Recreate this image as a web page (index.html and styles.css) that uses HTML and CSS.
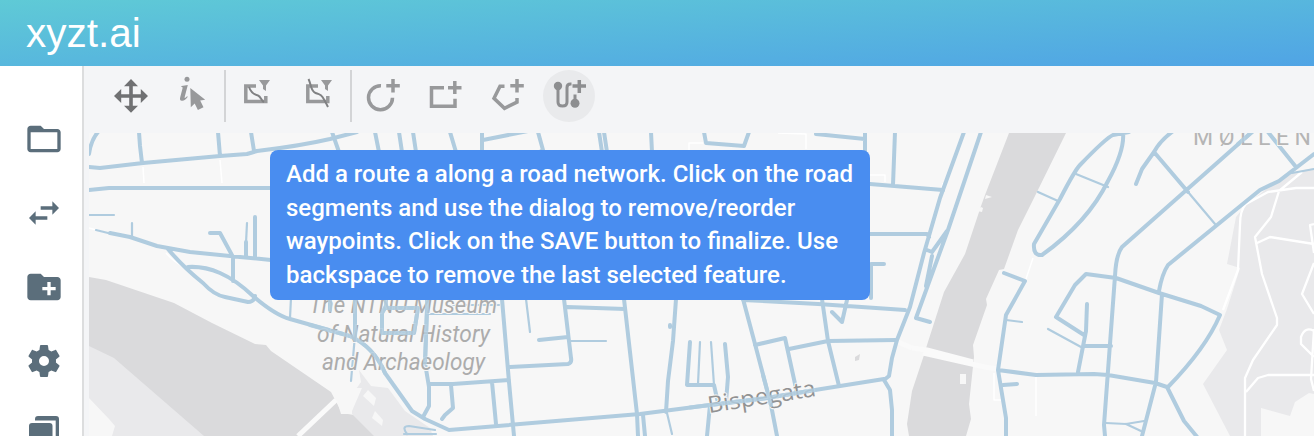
FILE: index.html
```html
<!DOCTYPE html>
<html lang="en">
<head>
<meta charset="utf-8">
<title>xyzt.ai</title>
<link rel="stylesheet" href="styles.css">
</head>
<body>
<header class="header"><span class="brand">xyzt.ai</span></header>
<div class="workspace">
  <nav class="sidebar">
    <svg class="nav-icon" viewBox="0 0 24 24"><path d="M20 6h-8l-2-2H4c-1.1 0-1.99.9-1.99 2L2 18c0 1.100.9 2 2 2h16c1.100 0 2-.9 2-2V8c0-1.100-.9-2-2-2zm0 12H4V8h16v10z"/></svg>
    <svg class="nav-icon" viewBox="0 0 24 24"><path d="M6.990 11L3 15l3.990 4v-3H14v-2H6.990v-3zM21 9l-3.990-4v3H10v2h7.010v3L21 9z"/></svg>
    <svg class="nav-icon" viewBox="0 0 24 24"><path d="M20 6h-8l-2-2H4c-1.110 0-1.990.89-1.990 2L2 18c0 1.110.89 2 2 2h16c1.110 0 2-.89 2-2V8c0-1.110-.89-2-2-2zm-1 8h-3v3h-2v-3h-3v-2h3V9h2v3h3v2z"/></svg>
    <svg class="nav-icon" viewBox="0 0 24 24"><path d="M19.140 12.940c.04-.3.06-.61.06-.94 0-.32-.02-.64-.07-.94l2.030-1.580c.18-.14.23-.41.12-.61l-1.920-3.320c-.12-.22-.37-.29-.59-.22l-2.390.96c-.5-.38-1.030-.7-1.620-.94L14.400 2.810c-.04-.24-.24-.41-.48-.41h-3.840c-.24 0-.43.17-.47.41L9.250 5.350c-.59.24-1.130.57-1.620.94l-2.390-.96c-.22-.08-.47 0-.59.22L2.740 8.870c-.12.21-.08.47.12.61l2.030 1.580c-.05.3-.09.63-.09.94s.02.64.07.94l-2.030 1.580c-.18.14-.23.41-.12.61l1.920 3.320c.12.22.37.29.59.22l2.390-.96c.5.38 1.030.7 1.620.94l.36 2.540c.05.24.24.41.48.41h3.840c.24 0 .44-.17.47-.41l.36-2.540c.59-.24 1.130-.56 1.620-.94l2.390.96c.22.08.47 0 .59-.22l1.920-3.320c.12-.22.07-.47-.12-.61l-2.010-1.580zM12 15a3 3 0 1 1 0-6 3 3 0 0 1 0 6z"/></svg>
    <svg class="nav-icon" viewBox="24 415 40 40"><rect x="29" y="423" width="23.500" height="24" rx="3"/><path d="M35 420.500V419q0-3 3-3H56q3 0 3 3V441H55.700V420.500Z"/></svg>
  </nav>
  <main class="content">
    <div class="toolbar">
      <div class="tool-group">
        <button class="tool tool-dark" aria-label="Pan"><svg viewBox="105 70 52 52"><path d="M131 79l7 7.200h-5.200v8h8V89l7.200 7-7.200 7v-5.200h-8v8h5.200l-7 7-7-7h5.200v-8h-8v5.200l-7.200-7 7.200-7v5.200h8v-8H124z"/></svg></button>
        <button class="tool" aria-label="Select"><svg viewBox="167 70 52 52"><circle cx="187" cy="79.300" r="2.500"/><path d="M181.500 86l6.300-1.100-3.100 12c-.4 1.700.8 1 2.300-.7l.8.500c-2 3.100-4 4.200-6 4-1.800-.2-2.100-1.600-1.600-3.500l2.300-8.700c.3-1.300 0-1.600-1.200-1.600zM190.300 88l14.900 11.800-5 .7 3.300 6.700-5.600 2.700-3.200-6.300-3.900 3.700z"/></svg></button>
      </div>
      <div class="tool-group">
        <button class="tool" aria-label="Filter inside"><svg viewBox="231 70 52 52"><path class="line" d="M256 86h-10.200v15.500h20v-5.500"/><path class="curve" d="M249 87c2 6 5 7.500 9 8.500 3 1 3 5 6 6.500"/><path d="M259 80h11l-4 5.500v5.500l-3-2v-3.500z"/></svg></button>
        <button class="tool" aria-label="Filter crossing"><svg viewBox="293 70 52 52"><path class="line" d="M318 86h-10.200v15.500h20v-5.500"/><path class="curve" d="M308.500 79c3 6 2 12 7 14s5 1 7 4 3 5 5.500 10"/><path d="M321 80h11l-4 5.500v5.500l-3-2v-3.500z"/></svg></button>
      </div>
      <div class="tool-group">
        <button class="tool" aria-label="Add circle"><svg viewBox="357 70 52 52"><path class="line" d="M381 85.700a12 12 0 1 0 11.500 12"/><path class="plus" d="M386.300 85.700h13.500M393 79v13.500"/></svg></button>
        <button class="tool" aria-label="Add rectangle"><svg viewBox="419 70 52 52"><path class="line" d="M444 87.700h-12.500v18.500h23.500v-7.500"/><path class="plus" d="M448 87.700h13.500M454.800 81v13"/></svg></button>
        <button class="tool" aria-label="Add polygon"><svg viewBox="481 70 52 52"><path class="line" d="M504.500 86.300h-4.500l-6 12 10.500 10 12.500-6.200v-4"/><path class="plus" d="M510.300 85.700h13.500M517 79v13.500"/></svg></button>
        <button class="tool tool-active" aria-label="Add route"><svg viewBox="543 70 52 52"><circle cx="558" cy="86" r="4.200"/><circle cx="575" cy="103.200" r="4.500"/><path class="route" d="M558 87v15q0 4 4.500 4t4.500-4V87.500q0-3.500 3.500-3.500h1M575 103v-8.500"/><path class="plus" d="M572.500 86h13.500M579.300 80v13"/></svg></button>
      </div>
    </div>
    <section class="map">
      <svg class="map-canvas" viewBox="89 133 1225 303">
        <g class="water">
          <path d="M89 277L106 280 174 303 212 323 255 344 266 345 271 351 331 392 342 413 360 416 377 436H89Z"/>
          <path d="M1009 133H1066L1034 198 1018 230 1004 269 999 270 986 299 987 305 973 345 974 357 969 404 971 419 966 436H909L907 424 912 391 925 352 927 345 944 292 965 254 981 206 985 195Z"/>
        </g>
        <g class="park">
          <path d="M89 346L114 358 204 436H89Z"/>
          <path d="M359 370L371 386 388 388 405 411 430 428 433 436H374L352 414 352 395 361 382Z"/>
          <path d="M1314 168V394L1309 393 1295 402 1290 416 1261 408V436H1230L1203 384 1227 350 1219 330 1227 309 1240 268 1227 264 1236 217 1245 206 1285 174 1300 171Z"/>
        </g>
        <g class="land">
          <path d="M89 398L109 419 115 426 112 436H89ZM331 388l13 0 18 0-10 23 0 3h-11l-5-16zM368 390l8 8-2 8-11-10zM375 411l8 9-1 6-10-8zM986 195l6 2-7 2zM981 207l2 1-1 4-5-1zM960 374h6v10h-6z"/>
        </g>
        <g class="faint">
          <path d="M143 167l1 16M220 160l2 23M166 253q9 10 17 13M89 228l15 4M943 183l-7 31M689 174v-31h14M778 133l28 1v15M1033 258l-7 21M1036 377v39M994 373v27h7M870 175h15v7"/>
        </g>
        <g class="path-wide">
          <path d="M298 436l38-36M898 342l14 6M923 353l62 14 13 2M912 348l15 2 46 12"/>
        </g>
        <g class="paths">
          <path d="M1245 436V378L1253 360 1277 325V318L1262 274 1255 237 1271 217 1279 191 1302 172M1314 188L1296 188 1268 192 1246 204Q1240 210 1240 225L1238 270 1223 310M1257 243L1270 237 1314 244M1314 224l-4 1 4 28M1314 263l-12 31 12 20M1314 331q-9-5-13 6v7l13 13M1314 329l-3 50 3 12M1246 392L1258 378 1268 375H1314"/>
        </g>
        <g class="roads">
          <path d="M89 154q2-14 9-22M139 132l1 14 2 17M218 132l2 24M251 132l3 19M89 167l11 1 43-5 77-7 27-2 10-3Q300 146 330 139L357 132M89 190l20-2H271"/>
          <path d="M110 233L130 237 157 246 190 252 240 257 271 260M168 249Q183 267 203 283Q214 295 225 297L248 302Q254 302 255 296M188 267Q204 266 220 273T253 296Q275 315 290 319L350 336Q374 347 385 373L412 411 425 419 449 430 640 414 710 405 767 398 815 390 884 379M233 281v-24M210 233h10l13 24M255 257V217M246 257v-15"/>
          <path d="M355 300v40M330 300v10M332 132l7 20M375 132l4 20M399 132l3 20M413 132l3 20M450 132l6 20M482 132v20M483 140l45-9M538 132l5 18-3 2M599 132l3 20M604 132l3 20M651 132l1 20M704 132l2 11 38 3 5-14M816 134l49 5M865 132v20M895 132l-2 53M870 184l73 6"/>
          <path d="M386 299v7l-4 7v20h32l4-25h-32M418 308h9M427 299v10l-2 54 4 24v19l-6 11M429 384h24l56-4M451 385l2 23-8 7-3 4M492 382l4 42M502 299l7 83 5 54M510 367l58-3q4-1 3-6L564 299M567 307l58 2M624 299l13 115 1 22M643 415l2 21M568 337l-29 3"/>
          <path d="M676 299l-3 42-5 40-2 31M670 325v2M690 342l-3 43h27l4 18M725 344l3 33-2 25M710 405l-3 31M743 299l12 45 16 61 6 31M743 300l75 4 87 6M755 345l30-7 12 55M789 349l39-8M822 299l6 42 11 45M828 341l68-1M847 300l-5 22-10-10"/>
          <path d="M964 132l-24 66-16 55-14 54-13 33-5 18-3 18-5 4 6 10 2 20v36M981 132L948 230 916 318l14 4M947 231l-15 21-5-2M932 256l-6 30M870 234h57l2 3M884 264h-13v34"/>
          <path d="M1129 132L1113 135Q1106 138 1080 165 1075 170 1060 199L1034 244Q1033 256 1042 255 1088 222 1108 181 1125 150 1123 132M1004 273l21 8-19 34-8 55 5 30 3 18v18M998 370l38 5 58-1 14 1M1003 385l14-1M1056 317l28 18M1172 132Q1160 141 1154 152L1142 169 1136 184M1154 152L1188 192M1252 132L1122 247Q1116 255 1115 276L1104 425 1105 436M1268 132l28 35M1314 154l-35 27-19 9L1168 265Q1162 274 1159 291M1056 317L1075 285 1086 274 1116 278 1159 293 1201 306 1220 315Q1206 348 1168 387M1162 294l-6 88-14 54M1108 375l47 8 12 4 17 34 14 17M1087 304l-1 27-8 41M1084 346h27"/>
        </g>
        <g class="roads thin">
          <path d="M89 215h25M96 230l16 4M132 238v-15M246 243l1-20M290 318l1-20M355 335l-4 46M700 342l-2 42M711 342l3 43M571 341h35M526 299l4 33M428 314h62M452 305h47M1038 192l20 9M1076 174l32 13M1006 320l16 2M1048 329l33 18M1188 192l27 32M1292 173l22-4M1106 423l20 1 18-3M1126 424l15 7M667 413l5 21M436 434l-32-0M407 434q-6-8 2-8l26 4"/>
        </g>
        <path class="building" d="M855 357l5-3-1 6-4 1z"/>
        <g class="labels">
          <g class="label-place">
            <text x="309" y="313" textLength="188" lengthAdjust="spacingAndGlyphs">The NTNU Museum</text>
            <text x="317" y="342" textLength="173" lengthAdjust="spacingAndGlyphs">of Natural History</text>
            <text x="322" y="370" textLength="163" lengthAdjust="spacingAndGlyphs">and Archaeology</text>
          </g>
          <text class="label-district" x="1193" y="145" textLength="118">MØLLEN</text>
          <text class="label-street" transform="translate(709 413) rotate(-9)" textLength="109" lengthAdjust="spacingAndGlyphs">Bispegata</text>
        </g>
        <g class="roads label-crossings">
          <path d="M310 325l40 11q24 11 35 37M355 300v40M330 300v10M386 299v7l-4 7v20h32l4-25h-32M427 299v10l-2 54M690 407.500L710 405 767 398 815 390M763 375l8 30M1252 132l-14 12"/>
        </g>
      </svg>
      <div class="hint">
        <span>Add a route a along a road network. Click on the road</span>
        <span>segments and use the dialog to remove/reorder</span>
        <span>waypoints. Click on the SAVE button to finalize. Use</span>
        <span>backspace to remove the last selected feature.</span>
      </div>
    </section>
  </main>
</div>
</body>
</html>
```
FILE: styles.css
```css
* { box-sizing: border-box; }
body {
  margin: 0;
  height: 436px;
  overflow: hidden;
  display: flex;
  flex-direction: column;
  background: #f4f5f7;
  font-family: Roboto, sans-serif;
}
.header {
  flex: 0 0 66px;
  display: flex;
  align-items: center;
  padding: 0 26px 1px;
  background: linear-gradient(177deg, #5fcad6 0%, #50a4e5 100%);
}
.brand {
  color: #fff;
  font: 40.500px/46px "Liberation Sans", Arial, sans-serif;
}
.workspace { flex: 1; min-height: 0; display: flex; }
.sidebar {
  flex: 0 0 84px;
  display: flex;
  flex-direction: column;
  align-items: center;
  gap: 34px;
  padding: 53px 0 0 4px;
  background: #fff;
  border-right: 2px solid #dcddde;
  overflow: hidden;
}
.nav-icon { flex: 0 0 40px; width: 40px; height: 40px; margin-right: -2px; fill: #5b6e7b; }
.content { flex: 1; min-width: 0; display: flex; flex-direction: column; padding-left: 5px; }
.toolbar { flex: 0 0 67px; display: flex; padding: 4px 0 0 16px; }
.tool-group { display: flex; gap: 10px; height: 52px; }
.tool-group + .tool-group { border-left: 2px solid #d3d4d6; margin-left: 5px; padding-left: 5px; }
.tool {
  width: 52px;
  height: 52px;
  padding: 0;
  border: 0;
  border-radius: 50%;
  background: none;
  color: #98999b;
}
.tool svg { display: block; width: 52px; height: 52px; fill: currentColor; }
.tool-dark { color: #707173; }
.tool-active { background: #e9eaec; color: #8d8e90; }
.tool .line, .tool .plus, .tool .route, .tool .curve { fill: none; stroke: currentColor; }
.tool .line { stroke-width: 3.500px; }
.tool .plus { stroke-width: 3.500px; }
.tool .route { stroke-width: 3; }
.tool .curve { stroke: #808183; stroke-width: 2; }
.map { position: relative; flex: 1; min-height: 0; background: #f7f7f7; }
.map-canvas { display: block; width: 1225px; height: 303px; }
.water { fill: #dadadc; }
.park { fill: #e9e9eb; }
.land { fill: #f7f7f7; }
.building { fill: #dadadc; }
.faint, .path-wide, .paths, .roads { fill: none; stroke: #fff; stroke-linejoin: round; }
.faint { stroke-width: 1.500px; }
.path-wide { stroke: #fafafa; stroke-width: 5; }
.paths { stroke-width: 2.300px; }
.roads { stroke: #b0ccdf; stroke-width: 4; stroke-linecap: round; }
.roads.thin { stroke-width: 2.200px; }
.labels { font-family: Roboto, sans-serif; paint-order: stroke; stroke: #f7f7f7; stroke-width: 2px; }
.label-place { font-size: 23px; font-style: italic; fill: #acacac; }
.label-district { font-size: 23px; fill: #b5b5b5; }
.label-street { font-family: "Open Sans", "Noto Sans", sans-serif; font-size: 23px; fill: #929292; }
.label-crossings { opacity: 0.85; }
.hint {
  position: absolute;
  left: 181px;
  top: 17px;
  width: 600px;
  height: 150px;
  padding: 8px 16px;
  border-radius: 8px;
  background: #498df0;
  color: #fff;
  font-size: 24px;
  font-weight: 500;
  line-height: 33.600px;
  white-space: nowrap;
}
.hint span { display: block; }
```
